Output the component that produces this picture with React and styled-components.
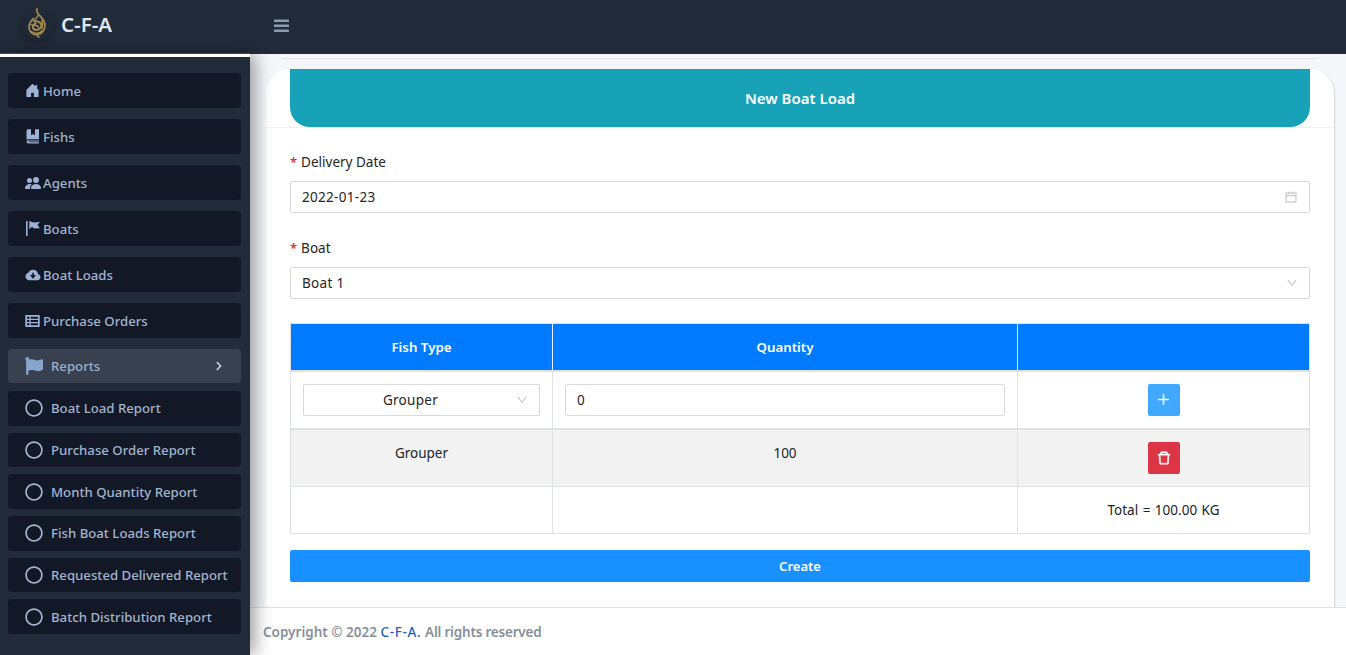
import React from 'react';
import styled, { createGlobalStyle } from 'styled-components';
import { FaFlag, FaRegCircle, FaChevronRight } from 'react-icons/fa';
import { BsFillHouseDoorFill, BsPeopleFill } from 'react-icons/bs';
import { BiSolidCloudDownload } from 'react-icons/bi';
import { AiOutlineCalendar, AiOutlineDown, AiOutlinePlus, AiOutlineDelete } from 'react-icons/ai';

const GlobalStyle = createGlobalStyle`
  html, body { margin: 0; padding: 0; height: 655px; overflow: hidden; }
  body { font-family: "Noto Sans", "Open Sans", sans-serif; font-size: 14px; color: #212529; background: #f4f6f9; }
  * { box-sizing: border-box; }
`;

// the book and flag in the menu have no close match in the icon packs
const BookIcon = () => (
  <svg width="14" height="15" viewBox="0 0 14 15" fill="currentColor">
    <path d="M.5 2C.5.9 1.300.3 2.300.3H5v6l2-1.400 2 1.400v-6h4v10H2.500c-1.200 0-2 .3-2 1z" />
    <path d="M.5 12.600c0-.8.800-1.200 2-1.200H13v1H3v.8h10v1.300H2.500c-1.200 0-2-.7-2-1.900z" />
  </svg>
);

const PennantIcon = () => (
  <svg width="14" height="15" viewBox="0 0 14 15" fill="currentColor">
    <rect x="0" y="0" width="1.600" height="15" />
    <path d="M3.300 0 7.500 1.600 14 1 11.500 4 14 7.200 8 7.600 6 5.800 3.300 8z" />
  </svg>
);

const TableListIcon = () => (
  <svg width="15" height="14" viewBox="0 0 15 14" fill="currentColor">
    <path d="M.3 1h14.400v12H.3zM2 2.800v2h2.400v-2zm3.600 0v2h7.400v-2zM2 6v2h2.400V6zm3.600 0v2h7.400V6zM2 9.200v2h2.400v-2zm3.600 0v2h7.400v-2z" fillRule="evenodd" />
  </svg>
);

const HamburgerIcon = () => (
  <svg width="15" height="14" viewBox="0 0 15 14" fill="#8d9ab0">
    <rect y="0.500" width="15" height="2.500" rx="0.500" />
    <rect y="5.500" width="15" height="2.500" rx="0.500" />
    <rect y="10.500" width="15" height="2.500" rx="0.500" />
  </svg>
);

const mainLinks = [
  { label: 'Home', Icon: () => <BsFillHouseDoorFill size={15} /> },
  { label: 'Fishs', Icon: BookIcon },
  { label: 'Agents', Icon: () => <BsPeopleFill size={16} /> },
  { label: 'Boats', Icon: PennantIcon },
  { label: 'Boat Loads', Icon: () => <BiSolidCloudDownload size={18} /> },
  { label: 'Purchase Orders', Icon: TableListIcon },
];

const reportLinks = [
  'Boat Load Report',
  'Purchase Order Report',
  'Month Quantity Report',
  'Fish Boat Loads Report',
  'Requested Delivered Report',
  'Batch Distribution Report',
];

function Logo() {
  return (
    <LogoCircle>
      <svg viewBox="0 0 20 30" fill="none" stroke="#a68b4e" strokeLinecap="round" strokeLinejoin="round">
        <path d="M10 .8c-.8 2.500.2 4.200 2 6 2.800 2.700 6 5.800 6 10.500 0 5-3.500 9-8 9.500-4.800.3-8-3.300-8-8 0-3.500 2-6 4.500-8.500" strokeWidth="1.700" />
        <path d="M7 13c2.500.5 5 .3 6.500 2 1.700 2 .8 5-1.500 6.200-2.500 1.200-5 .6-6-1.200-.8-2 .4-3.800 2.500-4.500" strokeWidth="2" />
        <path d="M4.500 23.500c3 2.500 8 2.500 11-1M11 7.500c-.8 2-2.500 3.200-3.500 5M15 12c1 3 1.200 5.500 0 8.500M4 16.500c1.500 1 3 1.200 4.500.5" strokeWidth="1.400" />
        <path d="M9 17.500l2.500 1.500M10.500 28.500l1.500.5" strokeWidth="1.500" />
      </svg>
    </LogoCircle>
  );
}

export default function App() {
  return (
    <Page>
      <GlobalStyle />
      <Brand>
        <Logo />
        <BrandName>C-F-A</BrandName>
      </Brand>
      <TopBar>
        <HamburgerIcon />
      </TopBar>

      <Sidebar>
        {mainLinks.map(({ label, Icon }) => (
          <NavItem key={label}>
            <NavIcon><Icon /></NavIcon>
            {label}
          </NavItem>
        ))}
        <ReportsToggle>
          <FaFlag size={18} />
          <span>Reports</span>
          <Chevron><FaChevronRight size={10} /></Chevron>
        </ReportsToggle>
        <SubList>
          {reportLinks.map((label) => (
            <SubItem key={label}>
              <FaRegCircle size={18} />
              {label}
            </SubItem>
          ))}
        </SubList>
      </Sidebar>

      <Main>
        <Content>
          <Rule />
          <Card>
            <CardHead>
              <Banner>New Boat Load</Banner>
            </CardHead>
            <CardBody>
              <Label><Star>*</Star>Delivery Date</Label>
              <Field>
                2022-01-23
                <FieldIcon><AiOutlineCalendar size={14} /></FieldIcon>
              </Field>
              <Label $second><Star>*</Star>Boat</Label>
              <Field>
                Boat 1
                <FieldIcon><AiOutlineDown size={12} /></FieldIcon>
              </Field>

              <Table>
                <colgroup>
                  <col width="262" />
                  <col width="465" />
                  <col width="292" />
                </colgroup>
                <thead>
                  <tr>
                    <Th>Fish Type</Th>
                    <Th>Quantity</Th>
                    <Th />
                  </tr>
                </thead>
                <tbody>
                  <InputRow>
                    <Td>
                      <CellField $center>
                        Grouper
                        <FieldIcon><AiOutlineDown size={12} /></FieldIcon>
                      </CellField>
                    </Td>
                    <Td><CellField>0</CellField></Td>
                    <Td>
                      <IconButton $color="#40a9ff"><AiOutlinePlus size={15} /></IconButton>
                    </Td>
                  </InputRow>
                  <ItemRow>
                    <TopCell>Grouper</TopCell>
                    <TopCell>100</TopCell>
                    <Td>
                      <IconButton $color="#dc3545"><AiOutlineDelete size={16} /></IconButton>
                    </Td>
                  </ItemRow>
                  <TotalRow>
                    <Td />
                    <Td />
                    <TotalCell>Total = 100.00 KG</TotalCell>
                  </TotalRow>
                </tbody>
              </Table>

              <CreateButton>Create</CreateButton>
            </CardBody>
          </Card>
        </Content>
        <Footer>
          Copyright © 2022&nbsp;<FooterLink>C-F-A.</FooterLink>&nbsp;<FooterRest>All rights reserved</FooterRest>
        </Footer>
      </Main>
    </Page>
  );
}

const Page = styled.div`
  display: grid;
  grid-template-columns: 250px 1fr;
  grid-template-rows: 54px 601px;
  width: 1346px;
  height: 655px;
  overflow: hidden;
`;

const Brand = styled.div`
  display: flex;
  align-items: center;
  gap: 8px;
  padding: 0 0 5px 21px;
  background: #222b3a;
  border-bottom: 1px solid #4b5563;
`;

const LogoCircle = styled.div`
  width: 32px;
  height: 32px;
  border-radius: 50%;
  background: #1f2938;
  box-shadow: 0 3px 6px rgba(0, 0, 0, 0.25);
  display: flex;
  align-items: center;
  justify-content: center;
  svg { width: 20px; height: 30px; margin-top: -2px; flex: none; }
`;

const BrandName = styled.div`
  font-size: 20.500px;
  font-weight: 600;
  line-height: 28px;
  color: #dfe5ee;
`;

const TopBar = styled.div`
  display: flex;
  align-items: center;
  padding: 0 0 2px 24px;
  background: #222b3a;
`;

const Sidebar = styled.nav`
  display: flex;
  flex-direction: column;
  border-top: 3px solid #fff;
  padding: 16px 9px 0 8px;
  background: #222b3a;
  box-shadow: 5px 0 16px rgba(0, 0, 0, 0.38);
  z-index: 1;
`;

const NavItem = styled.div`
  display: flex;
  align-items: center;
  gap: 3px;
  height: 35px;
  margin-bottom: 11px;
  padding: 0 0 0 17px;
  border-radius: 4px;
  background: #121826;
  color: #a3b4cf;
  font-size: 13.200px;
  font-weight: 500;
`;

const NavIcon = styled.span`
  display: flex;
  align-items: center;
  justify-content: center;
  width: 15px;
  color: #9db2d4;
  svg { flex: none; }
`;

const ReportsToggle = styled.div`
  display: flex;
  align-items: center;
  gap: 8px;
  height: 34px;
  margin-bottom: 8px;
  padding: 0 17px 0 17px;
  border-radius: 4px;
  background: #394150;
  color: #9fb0c9;
  font-size: 13.200px;
  font-weight: 500;
  svg { color: #87a5cc; }
`;

const Chevron = styled.span`
  margin-left: auto;
  display: flex;
  svg { color: #c2cfe0; }
`;

const SubList = styled.div`
  display: flex;
  flex-direction: column;
  gap: 7px;
`;

const SubItem = styled.div`
  display: flex;
  align-items: center;
  gap: 8px;
  height: 34.700px;
  padding: 0 0 0 17px;
  border-radius: 4px;
  background: #121826;
  color: #a3b4cf;
  font-size: 13.200px;
  font-weight: 500;
  white-space: nowrap;
  svg { flex: none; color: #a3b4cf; }
`;

const Main = styled.main`
  display: flex;
  flex-direction: column;
  min-width: 0;
`;

const Content = styled.div`
  flex: 1;
  padding: 4px 12px 0 16px;
  background: #f4f6f9;
  min-height: 0;
  display: flex;
  flex-direction: column;
`;

const Rule = styled.div`
  height: 1px;
  margin: 0 16px 10px 15px;
  background: #dee2e6;
`;

const Card = styled.section`
  flex: 1;
  background: #fff;
  border-radius: 24px 24px 0 0;
  box-shadow: 1px 1px 2px rgba(0, 0, 0, 0.14);
`;

const CardHead = styled.header`
  padding: 0 24px;
  border-bottom: 1px solid #eef0f2;
`;

const Banner = styled.div`
  display: flex;
  align-items: center;
  justify-content: center;
  height: 58px;
  border-radius: 0 0 20px 20px;
  background: #17a2b8;
  color: #fff;
  font-size: 15px;
  font-weight: 600;
`;

const CardBody = styled.div`
  padding: 24px 24px 0;
`;

const Label = styled.div`
  display: flex;
  align-items: center;
  height: 20px;
  margin: ${(p) => (p.$second ? '25px' : '0')} 0 9px;
  font-size: 13.500px;
  color: #262626;
`;

const Star = styled.span`
  margin-right: 4px;
  color: #dc2c36;
  font-size: 13px;
  font-weight: 600;
`;

const Field = styled.div`
  display: flex;
  align-items: center;
  justify-content: space-between;
  height: 32px;
  padding: 0 11px;
  border: 1px solid #d9d9d9;
  border-radius: 2px;
  font-size: 13.500px;
  letter-spacing: 0.300px;
  color: #262626;
`;

const FieldIcon = styled.span`
  display: flex;
  color: #bfbfbf;
`;

const Table = styled.table`
  width: 1019px;
  margin-top: 24px;
  border-collapse: collapse;
  table-layout: fixed;
  font-size: 13.500px;
  text-align: center;
`;

const Th = styled.th`
  height: 47px;
  border: 1px solid #dee2e6;
  border-bottom: 2px solid #dee2e6;
  background: #007bff;
  color: #fff;
  font-size: 13.300px;
  font-weight: 600;
  &:not(:last-child) { border-right-color: #e8eef5; }
`;

const Td = styled.td`
  border: 1px solid #dee2e6;
  padding: 0 12px;
  color: #212529;
`;

const TopCell = styled(Td)`
  vertical-align: top;
  padding-top: 14px;
`;

const TotalCell = styled(Td)`
  word-spacing: 1px;
`;

const InputRow = styled.tr`
  height: 58px;
`;

const ItemRow = styled.tr`
  height: 58px;
  background: #f2f2f2;
  td { border-top: 2px solid #dee2e6; }
`;

const TotalRow = styled.tr`
  height: 47px;
`;

const CellField = styled(Field)`
  position: relative;
  justify-content: ${(p) => (p.$center ? 'center' : 'flex-start')};
  padding-right: ${(p) => (p.$center ? '33px' : '11px')};
  ${FieldIcon} {
    position: absolute;
    right: 11px;
    top: 9px;
  }
`;

const IconButton = styled.button`
  display: inline-flex;
  align-items: center;
  justify-content: center;
  width: 32px;
  height: 32px;
  padding: 0;
  border: 0;
  border-radius: 2px;
  background: ${(p) => p.$color};
  color: #fff;
  vertical-align: middle;
  svg { stroke: currentColor; stroke-width: 30; }
`;

const CreateButton = styled.button`
  display: block;
  width: 100%;
  height: 32px;
  margin-top: 16px;
  border: 0;
  border-radius: 2px;
  background: #1890ff;
  color: #fff;
  font-family: inherit;
  font-size: 13px;
  font-weight: 600;
`;

const Footer = styled.footer`
  display: flex;
  align-items: center;
  flex: none;
  height: 48px;
  padding: 0 0 0 13px;
  border-top: 1px solid #dee2e6;
  background: #fff;
  color: #869099;
  font-size: 13.500px;
  font-weight: 600;
`;

const FooterLink = styled.span`
  color: #1f5fbf;
  font-weight: 500;
  letter-spacing: 0.700px;
`;

const FooterRest = styled.span`
  letter-spacing: -0.200px;
`;
